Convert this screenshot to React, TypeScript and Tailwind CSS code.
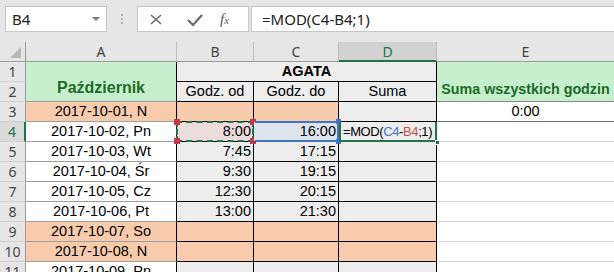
import React from 'react';

const cellFont = { fontFamily: '"Liberation Sans", Arial, sans-serif' };
const uiFont = { fontFamily: '"Noto Sans", "Open Sans", sans-serif' };

type Row = { n: number; a: string; b?: string; c?: string; orange?: boolean; dOrange?: boolean };

const rows: Row[] = [
  { n: 3, a: '2017-10-01, N', orange: true },
  { n: 4, a: '2017-10-02, Pn', b: '8:00', c: '16:00' },
  { n: 5, a: '2017-10-03, Wt', b: '7:45', c: '17:15' },
  { n: 6, a: '2017-10-04, Śr', b: '9:30', c: '19:15' },
  { n: 7, a: '2017-10-05, Cz', b: '12:30', c: '20:15' },
  { n: 8, a: '2017-10-06, Pt', b: '13:00', c: '21:30' },
  { n: 9, a: '2017-10-07, So', orange: true, dOrange: true },
  { n: 10, a: '2017-10-08, N', orange: true, dOrange: true },
  { n: 11, a: '2017-10-09, Pn' },
];

const RowHead: React.FC<{ n: number; active?: boolean }> = ({ n, active }) => (
  <div
    className={`flex items-center justify-center border-b border-[#d0d0d0] text-[14px] ${
      active ? 'bg-[#dadada] text-[#217346] border-r-2 border-r-[#217346]' : 'bg-[#e6e6e6] text-[#444] border-r border-r-[#9b9b9b]'
    }`}
    style={uiFont}
  >
    {n}
  </div>
);

const App: React.FC = () => {
  return (
    <div className="w-[614px] h-[272px] overflow-hidden bg-white">
      {/* formula bar */}
      <div className="h-[42px] bg-[#e6e6e6] flex items-start pt-[6px] pl-[5px]">
        <div className="w-[102px] h-[26px] bg-white border border-[#c6c6c6] flex items-center justify-between pl-[6px] pr-[6px]">
          <span className="text-[15px] text-[#222]" style={uiFont}>B4</span>
          <span className="w-0 h-0 border-l-[4px] border-r-[4px] border-t-[4px] border-l-transparent border-r-transparent border-t-[#7a7a7a]" />
        </div>
        <div className="w-[30px] h-[26px] flex flex-col items-center justify-center gap-[2px]">
          <span className="w-[2px] h-[2px] bg-[#b0b0b0]" />
          <span className="w-[2px] h-[2px] bg-[#b0b0b0]" />
          <span className="w-[2px] h-[2px] bg-[#b0b0b0]" />
        </div>
        <div className="w-[112px] h-[26px] bg-white border border-[#c6c6c6] flex items-center">
          <svg width="38" height="24" viewBox="0 0 38 24">
            <path d="M13 8 L23 17 M23 8 L13 17" stroke="#6a6a6a" strokeWidth="1.6" />
          </svg>
          <svg width="38" height="24" viewBox="0 0 38 24">
            <path d="M12 13 L17 18 L26 8" stroke="#6a6a6a" strokeWidth="2.2" fill="none" />
          </svg>
          <span className="ml-[6px] text-[15px] italic text-[#555]" style={{ fontFamily: '"Liberation Serif", serif' }}>
            f<span className="text-[11px]">x</span>
          </span>
        </div>
        <div className="flex-1 h-[26px] ml-[2px] bg-white border border-[#c6c6c6] border-r-0 flex items-center pl-[10px]">
          <span className="text-[15px] text-[#222]" style={uiFont}>=MOD(C4-B4;1)</span>
        </div>
      </div>

      {/* grid */}
      <div className="grid grid-cols-[26px_151px_77px_85px_98px_1fr] auto-rows-[20px] text-[14.5px] text-black" style={cellFont}>
        {/* column headers */}
        <div className="relative bg-[#e6e6e6] border-r border-b border-[#9b9b9b]">
          <svg className="absolute right-[4px] bottom-[3px]" width="11" height="11" viewBox="0 0 11 11">
            <path d="M11 0 L11 11 L0 11 Z" fill="#b8b8b8" />
          </svg>
        </div>
        {['A', 'B', 'C'].map((l) => (
          <div key={l} className="flex items-center justify-center bg-[#e6e6e6] border-r border-r-[#bdbdbd] border-b border-b-[#9b9b9b] text-[14px] text-[#444]" style={uiFont}>
            {l}
          </div>
        ))}
        <div className="flex items-center justify-center bg-[#d2d2d2] border-r border-r-[#bdbdbd] border-b-2 border-b-[#217346] text-[14px] text-[#217346]" style={uiFont}>
          D
        </div>
        <div className="flex items-center justify-center bg-[#e6e6e6] border-b border-b-[#9b9b9b] text-[14px] text-[#444]" style={uiFont}>
          E
        </div>

        {/* rows 1-2 */}
        <RowHead n={1} />
        <div className="row-span-2 bg-[#c6efce] border-r border-r-black border-b border-b-[#9e9e9e] flex items-end justify-center pb-[1px] text-[16px] font-bold text-[#1d6b27]">
          Październik
        </div>
        <div className="col-span-3 bg-[#ededed] border-r border-b border-black flex items-center justify-center font-bold">
          AGATA
        </div>
        <div className="row-span-2 bg-[#c6efce] border-b border-[#8a8a8a] flex items-end justify-center pb-[1px] text-[14.3px] font-bold text-[#1d6b27] whitespace-nowrap">
          Suma wszystkich godzin
        </div>
        <RowHead n={2} />
        <div className="bg-[#ededed] border-r border-b border-black flex items-center justify-center">Godz. od</div>
        <div className="bg-[#ededed] border-r border-b border-black flex items-center justify-center">Godz. do</div>
        <div className="bg-[#ededed] border-r border-b border-black flex items-center justify-center">Suma</div>

        {rows.map((r) => {
          const a = r.orange ? 'bg-[#f8cbad]' : 'bg-white';
          const bc = r.orange ? 'bg-[#f8cbad]' : 'bg-[#ededed]';
          const d = r.dOrange ? 'bg-[#f8cbad]' : 'bg-[#ededed]';
          const active = r.n === 4;
          return (
            <React.Fragment key={r.n}>
              <RowHead n={r.n} active={active} />
              <div className={`${a} border-r border-r-black border-b border-b-[#9e9e9e] flex items-center justify-center whitespace-nowrap`}>
                {r.a}
              </div>
              {active ? (
                <div className="relative bg-[#ecdcdc] border-r border-b border-black flex items-center justify-end pr-[2px]">
                  {r.b}
                  <span className="absolute inset-[-1px] border-2 border-dashed border-[#217346]" />
                  <span className="absolute left-[-3px] top-[-3px] w-[6px] h-[6px] bg-[#c8374a]" />
                  <span className="absolute right-[-3px] top-[-3px] w-[6px] h-[6px] bg-[#c8374a]" />
                  <span className="absolute left-[-3px] bottom-[-3px] w-[6px] h-[6px] bg-[#c8374a]" />
                  <span className="absolute right-[-3px] bottom-[-3px] w-[6px] h-[6px] bg-[#c8374a]" />
                </div>
              ) : (
                <div className={`${bc} border-r border-b border-black flex items-center justify-end pr-[2px]`}>{r.b}</div>
              )}
              {active ? (
                <div className="relative bg-[#dde4ee] border-r border-b border-black flex items-center justify-end pr-[2px]">
                  {r.c}
                  <span className="absolute left-[1px] right-[-1px] top-[-1px] bottom-[-1px] border-t-2 border-b-2 border-r-2 border-[#4472c4]" />
                  <span className="absolute right-[-3px] top-[-3px] w-[5px] h-[5px] bg-[#4472c4]" />
                  <span className="absolute right-[-3px] bottom-[-3px] w-[5px] h-[5px] bg-[#4472c4]" />
                </div>
              ) : (
                <div className={`${bc} border-r border-b border-black flex items-center justify-end pr-[2px]`}>{r.c}</div>
              )}
              {active ? (
                <div className="relative bg-[#ededed] border-r border-b border-black flex items-center pl-[4px] whitespace-nowrap z-10">
                  <span className="text-[13px] tracking-[-0.4px]">
                    =MOD(<span className="text-[#4472c4]">C4</span>-<span className="text-[#c0504d]">B4</span>;1)
                  </span>
                  <span className="absolute left-0 right-[-1px] top-0 bottom-[-1px] border-l-2 border-r-2 border-b-2 border-[#217346]" />
                  <span className="absolute right-[-4px] bottom-[-4px] w-[5px] h-[5px] bg-[#217346] border border-white" />
                </div>
              ) : (
                <div className={`${d} border-r border-b border-black`} />
              )}
              {r.n === 3 ? (
                <div className="bg-white border-b border-[#6f6f6f] flex items-center justify-center">0:00</div>
              ) : (
                <div className="bg-white border-b border-[#d4d4d4]" />
              )}
            </React.Fragment>
          );
        })}
      </div>
    </div>
  );
};

export default App;
